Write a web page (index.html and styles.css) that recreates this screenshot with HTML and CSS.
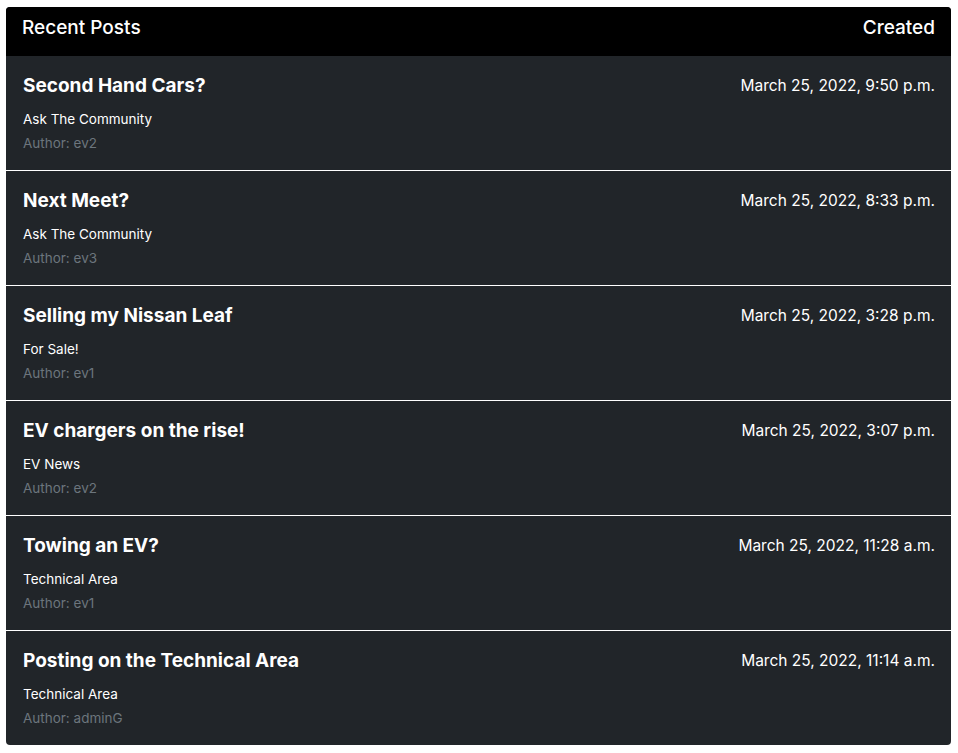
FILE: index.html
```html
<!DOCTYPE html>
<html lang="en">
<head>
<meta charset="utf-8">
<title>Recent Posts</title>
<link rel="stylesheet" href="styles.css">
</head>
<body>
<div class="posts">
  <div class="posts-head">
    <span>Recent Posts</span>
    <span>Created</span>
  </div>
  <div class="post">
    <div class="post-main">
      <h5 class="post-title">Second Hand Cars?</h5>
      <div class="post-cat">Ask The Community</div>
      <div class="post-author">Author: ev2</div>
    </div>
    <div class="post-date">March 25, 2022, 9:50 p.m.</div>
  </div>
  <div class="post">
    <div class="post-main">
      <h5 class="post-title">Next Meet?</h5>
      <div class="post-cat">Ask The Community</div>
      <div class="post-author">Author: ev3</div>
    </div>
    <div class="post-date">March 25, 2022, 8:33 p.m.</div>
  </div>
  <div class="post">
    <div class="post-main">
      <h5 class="post-title">Selling my Nissan Leaf</h5>
      <div class="post-cat">For Sale!</div>
      <div class="post-author">Author: ev1</div>
    </div>
    <div class="post-date">March 25, 2022, 3:28 p.m.</div>
  </div>
  <div class="post">
    <div class="post-main">
      <h5 class="post-title">EV chargers on the rise!</h5>
      <div class="post-cat">EV News</div>
      <div class="post-author">Author: ev2</div>
    </div>
    <div class="post-date">March 25, 2022, 3:07 p.m.</div>
  </div>
  <div class="post">
    <div class="post-main">
      <h5 class="post-title">Towing an EV?</h5>
      <div class="post-cat">Technical Area</div>
      <div class="post-author">Author: ev1</div>
    </div>
    <div class="post-date">March 25, 2022, 11:28 a.m.</div>
  </div>
  <div class="post">
    <div class="post-main">
      <h5 class="post-title">Posting on the Technical Area</h5>
      <div class="post-cat">Technical Area</div>
      <div class="post-author">Author: adminG</div>
    </div>
    <div class="post-date">March 25, 2022, 11:14 a.m.</div>
  </div>
</div>
</body>
</html>
```

FILE: styles.css
```css
html, body {
  margin: 0;
  padding: 0;
  background: #ffffff;
}

body {
  font-family: Inter, "Liberation Sans", sans-serif;
  color: #ffffff;
}

.posts {
  margin: 7px 7px 0 6px;
  background: #212529;
  border-radius: 4px;
  overflow: hidden;
}

.posts-head {
  display: flex;
  justify-content: space-between;
  align-items: flex-start;
  height: 49px;
  box-sizing: border-box;
  padding: 9px 16px 0 16px;
  background: #000000;
  font-size: 19px;
  line-height: 23px;
  font-weight: 500;
}

.post {
  display: flex;
  justify-content: space-between;
  align-items: flex-start;
  padding: 18px 16px 15px 17px;
  border-bottom: 1px solid #ffffff;
}

.post:last-child {
  border-bottom: none;
}

.post-title {
  margin: 0 0 9px 0;
  font-size: 19px;
  line-height: 24px;
  font-weight: 700;
}

.post-cat {
  font-size: 13.5px;
  line-height: 24px;
}

.post-author {
  font-size: 13.5px;
  line-height: 24px;
  color: #6c757d;
}

.post-date {
  font-size: 15.5px;
  line-height: 24px;
}
```
